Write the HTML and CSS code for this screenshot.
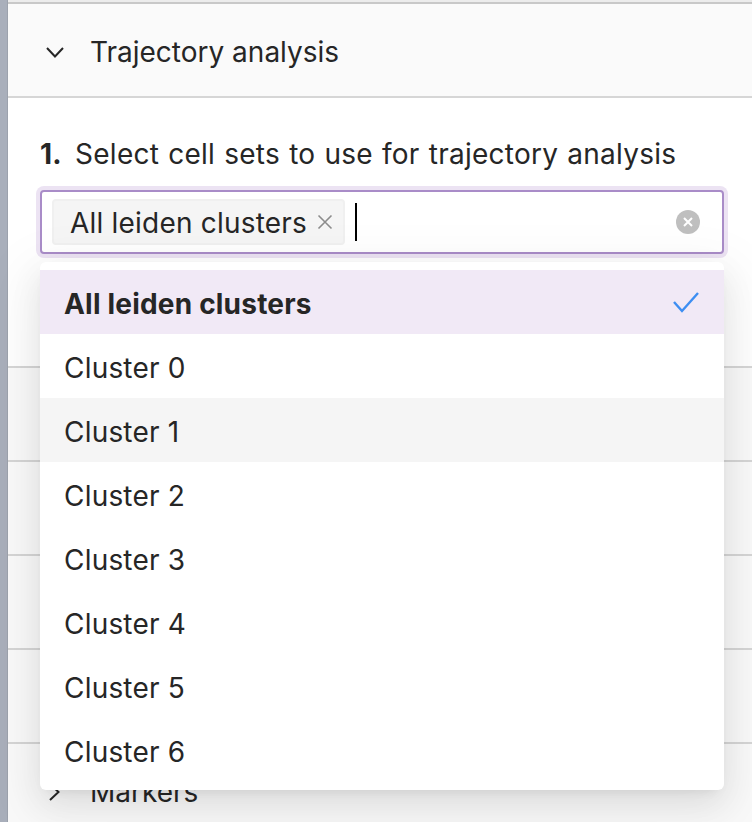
FILE: index.html
```html
<!DOCTYPE html>
<html lang="en">
<head>
<meta charset="UTF-8">
<title>Trajectory analysis</title>
<link rel="stylesheet" href="styles.css">
</head>
<body>
<div class="layout">
    <div class="side-edge"></div>
    <div class="collapse">

        <div class="collapse-item">
            <div class="collapse-header">
                <span class="arrow">
                    <svg width="18" height="12" viewBox="0 0 18 12"><polyline points="1,2 9,10.5 17,2" fill="none" stroke="#262626" stroke-width="2"/></svg>
                </span>
                Trajectory analysis
            </div>
            <div class="collapse-content">
                <p class="step"><b>1.</b> Select cell sets to use for trajectory analysis</p>

                <div class="select-wrap">
                    <div class="select focused">
                        <span class="tag">All leiden clusters
                            <svg class="tag-close" width="16" height="16" viewBox="0 0 16 16"><path d="M1.5 1.5 L14.5 14.5 M14.5 1.5 L1.5 14.5" stroke="#8c8c8c" stroke-width="1.6"/></svg>
                        </span>
                        <span class="cursor"></span>
                        <span class="clear">
                            <svg width="24" height="24" viewBox="0 0 24 24"><circle cx="12" cy="12" r="12" fill="#bfbfbf"/><path d="M8 8 L16 16 M16 8 L8 16" stroke="#fff" stroke-width="2"/></svg>
                        </span>
                    </div>

                    <div class="dropdown">
                        <div class="option selected">All leiden clusters
                            <svg class="check" width="28" height="22" viewBox="0 0 28 22"><polyline points="2,11 10,20 26,2" fill="none" stroke="#3d8ef2" stroke-width="2.4"/></svg>
                        </div>
                        <div class="option">Cluster 0</div>
                        <div class="option hover">Cluster 1</div>
                        <div class="option">Cluster 2</div>
                        <div class="option">Cluster 3</div>
                        <div class="option">Cluster 4</div>
                        <div class="option">Cluster 5</div>
                        <div class="option">Cluster 6</div>
                    </div>
                </div>
            </div>
        </div>

        <!-- panels hidden behind the open dropdown -->
        <div class="collapse-item"><div class="collapse-header"></div></div>
        <div class="collapse-item"><div class="collapse-header"></div></div>
        <div class="collapse-item"><div class="collapse-header"></div></div>
        <div class="collapse-item"><div class="collapse-header"></div></div>

        <div class="collapse-item">
            <div class="collapse-header">
                <span class="arrow">
                    <svg width="16" height="18" viewBox="0 0 16 18"><polyline points="4,1 12.5,9 4,17" fill="none" stroke="#262626" stroke-width="2"/></svg>
                </span>
                Markers
            </div>
        </div>

    </div>
</div>
</body>
</html>
```

FILE: styles.css
```css
body {
    margin: 0;
    background: #ececec;
    font-family: Inter, "Noto Sans", sans-serif;
    font-size: 28px;
    color: #262626;
}
.layout {
    display: flex;
    height: 822px;
    overflow: hidden;
}
.side-edge {
    width: 7px;
    flex-shrink: 0;
    background: #a9afbb;
    border-right: 1px solid #9ca2ad;
}
.collapse {
    flex: 1;
    margin-top: 2px;
    border-top: 2px solid #c8c8c8;
    background: #fafafa;
}
.collapse-item {
    border-bottom: 2px solid #d6d6d6;
}
.collapse-header {
    display: flex;
    align-items: center;
    height: 92px;
    box-sizing: border-box;
    padding: 4px 0 0 82px;
    line-height: 44px;
    position: relative;
}
.arrow {
    position: absolute;
    left: 38px;
    top: 48px;
    transform: translateY(-50%);
    display: flex;
}
.collapse-content {
    background: #fff;
    border-top: 2px solid #d6d6d6;
    padding: 32px 28px 112px 32px;
}
.step {
    margin: 0 0 16px;
    padding-top: 2px;
    height: 42px;
    line-height: 44px;
    letter-spacing: 0.25px;
    word-spacing: 1px;
}
.step b {
    font-weight: 700;
    margin-right: 4px;
}
.select-wrap {
    position: relative;
}
.select {
    display: flex;
    align-items: center;
    height: 64px;
    box-sizing: border-box;
    padding: 0 10px;
    border: 2px solid #a98cc8;
    border-radius: 4px;
    background: #fff;
}
.select.focused {
    box-shadow: 0 0 0 4px #ece3f3;
}
.tag {
    display: flex;
    align-items: center;
    height: 46px;
    box-sizing: border-box;
    padding: 2px 10px 0 16px;
    background: #f5f5f5;
    border: 2px solid #f0f0f0;
    border-radius: 4px;
    letter-spacing: 0.2px;
}
.tag-close {
    margin-left: 10px;
    margin-bottom: 2px;
}
.cursor {
    width: 2px;
    height: 38px;
    margin-left: 10px;
    background: #000;
}
.clear {
    margin-left: auto;
    margin-right: 12px;
    display: flex;
}
.dropdown {
    position: absolute;
    top: 72px;
    left: 0;
    right: 0;
    padding: 8px 0;
    background: #fff;
    border-radius: 6px;
    box-shadow: 0 6px 12px -8px rgba(0,0,0,0.12), 0 12px 32px 0 rgba(0,0,0,0.08), 0 18px 56px 16px rgba(0,0,0,0.05);
    z-index: 10;
}
.option {
    display: flex;
    align-items: center;
    height: 64px;
    box-sizing: border-box;
    padding: 4px 24px 0;
    line-height: 44px;
    letter-spacing: 0.2px;
}
.option.selected {
    background: #f1e9f6;
    font-weight: 700;
}
.option.hover {
    background: #f5f5f5;
}
.check {
    margin-left: auto;
    margin-bottom: 4px;
}
```
